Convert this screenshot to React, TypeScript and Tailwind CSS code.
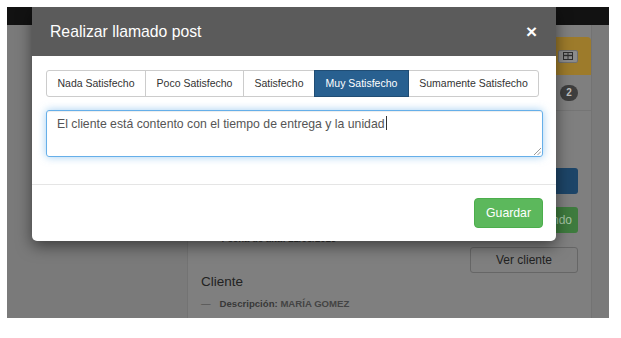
import React from "react";

const tabs = [
  { label: "Nada Satisfecho", w: "w-[100px]" },
  { label: "Poco Satisfecho", w: "w-[99px]" },
  { label: "Satisfecho", w: "w-[72px]" },
  { label: "Muy Satisfecho", w: "w-[95px]" },
  { label: "Sumamente Satisfecho", w: "w-[131px]" },
];

function GridIcon() {
  return (
    <svg width="10" height="8" viewBox="0 0 10 8" fill="none">
      <rect x="0.5" y="0.5" width="9" height="7" stroke="#2e2e2e" strokeWidth="1" />
      <line x1="0" y1="3.5" x2="10" y2="3.5" stroke="#2e2e2e" strokeWidth="1.4" />
      <line x1="5" y1="0" x2="5" y2="8" stroke="#2e2e2e" strokeWidth="1" />
    </svg>
  );
}

function Background() {
  return (
    <div className="flex h-full flex-col">
      <div className="h-[18px] shrink-0 bg-[#121212]" />
      <div className="flex flex-1">
        <div className="w-[180px] bg-[#7a7a7a]" />
        <div className="flex w-[405px] flex-col border-x border-[#737373] bg-[#7f7f7f] pt-[12px]">
          <div className="flex h-[38px] items-center justify-end rounded-tr-[4px] bg-[#9d7b2b] pr-[13px]">
            <div className="flex h-[13px] w-[20px] items-center justify-center rounded-[2px] border border-[#6f6f6f] bg-[#8c8c8c]">
              <GridIcon />
            </div>
          </div>
          <div className="flex h-[36px] items-center justify-end border-b border-[#757575] pr-[13px]">
            <span className="flex h-[16px] w-[18px] items-center justify-center rounded-full bg-[#3e3e3e] text-[10px] font-bold text-[#bdbdbd]">
              2
            </span>
          </div>
          <div className="flex justify-between">
            <div className="pl-[14px] pt-[122px]">
              <div className="flex items-center gap-[10px] text-[9.6px] font-bold leading-[12px] text-[#333]">
                <span className="font-normal text-[#444]">—</span>
                <span>Fecha de alta: 21/03/2019</span>
              </div>
            </div>
            <div className="mr-[13px] flex w-[108px] flex-col pt-[57px]">
              <div className="h-[26px] rounded-[3px] bg-[#1d4568]" />
              <div className="mt-[13px] flex h-[26px] items-center justify-end rounded-[3px] bg-[#3e7b3e] pr-[6px] text-[12px] text-[#a5c5a5]">
                Llamando
              </div>
              <div className="mt-[14px] flex h-[26px] items-center justify-center rounded-[3px] border border-[#666] text-[12px] text-[#222]">
                Ver cliente
              </div>
            </div>
          </div>
          <div className="pl-[13px]">
            <div className="mt-[1px] text-[13.5px] leading-[16px] text-[#222]">Cliente</div>
            <div className="mt-[8px] flex items-center gap-[9px] text-[9.6px] font-bold leading-[12px]">
              <span className="font-normal text-[#444]">—</span>
              <span className="text-[#383838]">
                Descripción: <span className="text-[#444]">MARÍA GOMEZ</span>
              </span>
            </div>
          </div>
        </div>
        <div className="flex-1 bg-[#7a7a7a]" />
      </div>
    </div>
  );
}

function Modal() {
  return (
    <div className="absolute left-[25px] top-0 w-[524px] rounded-b-[5px] bg-white shadow-[0_5px_15px_rgba(0,0,0,0.5)]">
      <div className="flex h-[49px] items-center justify-between bg-[#5b5b5b] pl-[18px] pr-[19px]">
        <h4 className="text-[15.75px] text-white">Realizar llamado post</h4>
        <span className="text-[19px] font-bold leading-none text-white">×</span>
      </div>
      <div className="pb-[27px] pl-[14px] pr-[13px] pt-[14px]">
        <div className="flex">
          {tabs.map((t, i) => {
            const active = i === 3;
            return (
              <div
                key={t.label}
                className={`flex h-[27px] items-center justify-center border text-[10.5px] ${t.w} ${
                  i > 0 ? "-ml-px" : ""
                } ${i === 0 ? "rounded-l-[3px]" : ""} ${i === tabs.length - 1 ? "rounded-r-[3px]" : ""} ${
                  active ? "relative border-[#204d74] bg-[#286090] text-white" : "border-[#ccc] bg-white text-[#333]"
                }`}
              >
                {t.label}
              </div>
            );
          })}
        </div>
        <div className="relative mt-[13px] h-[47px] rounded-[3px] border border-[#66afe9] px-[10px] py-[5px] text-[12.25px] leading-[17.5px] text-[#555] shadow-[inset_0_1px_1px_rgba(0,0,0,0.075),0_0_8px_rgba(102,175,233,0.6)]">
          El cliente está contento con el tiempo de entrega y la unidad
          <span className="ml-px inline-block h-[14px] w-px bg-[#333] align-[-2px]" />
          <svg className="absolute bottom-[1px] right-[1px]" width="8" height="8" viewBox="0 0 8 8">
            <line x1="1" y1="8" x2="8" y2="1" stroke="#9a9a9a" strokeWidth="1" />
            <line x1="4.5" y1="8" x2="8" y2="4.5" stroke="#9a9a9a" strokeWidth="1" />
          </svg>
        </div>
      </div>
      <div className="flex justify-end border-t border-[#e5e5e5] pb-[13px] pl-[14px] pr-[13px] pt-[13px]">
        <button className="h-[30px] rounded-[4px] border border-[#4cae4c] bg-[#5cb85c] px-[11px] text-[12.25px] text-white">
          Guardar
        </button>
      </div>
    </div>
  );
}

export default function App() {
  return (
    <div className="h-[338px] w-[621px] bg-white pl-[7px] pt-[7px] font-['Liberation_Sans',Arial,sans-serif]">
      <div className="relative h-[311px] w-[602px] overflow-hidden">
        <Background />
        <Modal />
      </div>
    </div>
  );
}
